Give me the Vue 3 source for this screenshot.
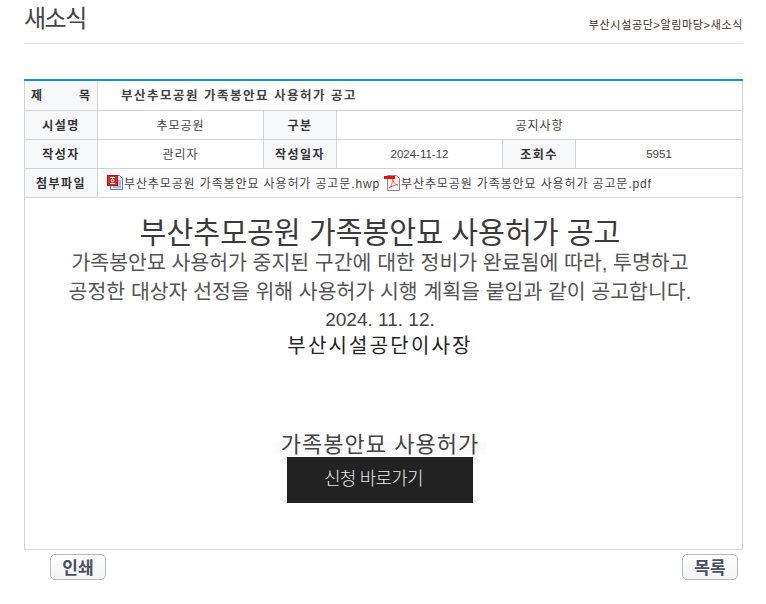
<template>
  <div class="page">
    <div class="head">
      <h2>새소식</h2>
      <div class="crumb">부산시설공단&gt;알림마당&gt;새소식</div>
    </div>

    <table class="view">
      <colgroup>
        <col class="c-label" />
        <col class="c-value" />
        <col class="c-label" />
        <col class="c-value2" />
        <col class="c-label2" />
        <col />
      </colgroup>
      <tbody>
        <tr>
          <th class="spread"><span>제</span><span>목</span></th>
          <td colspan="5" class="subject">{{ subject }}</td>
        </tr>
        <tr>
          <th>시설명</th>
          <td>추모공원</td>
          <th>구분</th>
          <td colspan="3">공지사항</td>
        </tr>
        <tr>
          <th>작성자</th>
          <td>관리자</td>
          <th>작성일자</th>
          <td class="num">2024-11-12</td>
          <th>조회수</th>
          <td class="num">5951</td>
        </tr>
        <tr>
          <th>첨부파일</th>
          <td colspan="5" class="files">
            <a class="file">
              <svg width="17" height="17" viewBox="0 0 17 17">
                <path d="M3.500 1.500h9l3 3v11h-12z" fill="#dfe8f6" stroke="#5b7fb5" />
                <path d="M6 11h8M6 13h8M11 7h3M11 9h3" stroke="#6f8fc4" />
                <rect x="0.500" y="1.500" width="10" height="10" fill="#e02a20" stroke="#a81810" />
                <path d="M3 3.500h5M5.500 3v1.500M3 9.500h5" stroke="#fff" stroke-width="1.200" fill="none" />
                <circle cx="5.500" cy="6.500" r="1.300" fill="none" stroke="#fff" />
              </svg>부산추모공원 가족봉안묘 사용허가 공고문.hwp
            </a>
            <a class="file">
              <svg width="17" height="17" viewBox="0 0 17 17">
                <path d="M3.500 1.500h9l3 3v12h-12z" fill="#f4f4f4" stroke="#8a8a8a" />
                <path d="M5 14c2.500-2 4-6 3.500-9.500C9 8 11 10.500 14 11c-3 0-6.500 1-9 3z" fill="none" stroke="#ee6a6a" />
                <rect x="0" y="2" width="11" height="3" fill="#ee0a0a" />
              </svg>부산추모공원 가족봉안묘 사용허가 공고문.pdf
            </a>
          </td>
        </tr>
      </tbody>
    </table>

    <div class="content">
      <p class="big">{{ subject }}</p>
      <p class="mid">가족봉안묘 사용허가 중지된 구간에 대한 정비가 완료됨에 따라, 투명하고</p>
      <p class="mid">공정한 대상자 선정을 위해 사용허가 시행 계획을 붙임과 같이 공고합니다.</p>
      <p class="date">2024. 11. 12.</p>
      <p class="sign">부산시설공단이사장</p>
      <div class="apply">
        <span class="apply-label">가족봉안묘 사용허가</span>
        <a class="apply-btn">신청 바로가기</a>
      </div>
    </div>

    <div class="actions">
      <button>인쇄</button>
      <button>목록</button>
    </div>
  </div>
</template>

<script setup>
const subject = '부산추모공원 가족봉안묘 사용허가 공고'
</script>

<style>
html,
body {
  margin: 0;
  background: #fff;
}
</style>

<style scoped>
.page {
  width: 719px;
  margin-left: 24px;
  font-family: "Liberation Sans", "Noto Sans CJK KR", sans-serif;
  color: #333;
}

.head {
  display: flex;
  justify-content: space-between;
  height: 43px;
  border-bottom: 1px solid #e5e5e5;
  margin-bottom: 35px;
}

.head h2 {
  margin: 0;
  font-size: 24px;
  font-weight: 400;
  line-height: 38px;
  color: #444;
  letter-spacing: -1.500px;
}

.crumb {
  font-size: 11px;
  line-height: 16px;
  margin-top: 17px;
  color: #3f2f1a;
  letter-spacing: 0.650px;
}

.view {
  width: 719px;
  table-layout: fixed;
  border-collapse: collapse;
  border-top: 2px solid #1b8dd8;
  font-size: 12px;
}

.c-label {
  width: 73px;
}

.c-value {
  width: 166px;
}

.c-value2 {
  width: 166px;
}

.c-label2 {
  width: 73px;
}

.view th,
.view td {
  height: 29px;
  padding: 0;
  border: 1px solid #d4d4d4;
  text-align: center;
  box-sizing: border-box;
  letter-spacing: 1px;
}

.view tr:first-child th,
.view tr:first-child td {
  height: 30px;
  border-top: 0;
  padding-bottom: 1px;
}

.view th {
  background: #f7f8fa;
  font-weight: 700;
  color: #333;
  letter-spacing: 1.500px;
}

.view td {
  color: #444;
}

.view td.num {
  font-size: 11.500px;
  letter-spacing: 0;
}

.view th.spread {
  text-align: left;
  padding: 0 6px 1px;
}

.view th.spread span {
  display: inline-block;
  width: 30px;
}

.view th.spread span + span {
  margin-left: 18px;
  width: 12px;
}

.view td.subject {
  text-align: left;
  padding-left: 23px;
  font-size: 12.500px;
  font-weight: 700;
  letter-spacing: 1.500px;
}

.view td.files {
  text-align: left;
  padding-left: 9px;
  letter-spacing: 0.880px;
}

.file {
  display: inline-flex;
  align-items: center;
  margin-right: 4px;
  vertical-align: middle;
}

.content {
  height: 352px;
  box-sizing: border-box;
  border: 1px solid #d4d4d4;
  border-top: 0;
  text-align: center;
  padding: 20px 7px 0 0;
}

.content p {
  margin: 0;
}

.big {
  font-size: 29.200px;
  line-height: 30px;
  color: #3a3a3a;
}

.mid {
  font-size: 20.500px;
  line-height: 29px;
  color: #555;
}

.content .date {
  margin-top: 1px;
  font-size: 19px;
  line-height: 26px;
  color: #444;
}

.sign {
  font-family: "Liberation Serif", "Noto Sans CJK KR", serif;
  font-size: 20px;
  font-weight: 400;
  line-height: 26px;
  letter-spacing: 2.200px;
  color: #222;
}

.apply {
  margin-top: 74px;
  display: flex;
  flex-direction: column;
  align-items: center;
}

.apply-label {
  font-size: 22px;
  line-height: 24px;
  height: 22px;
  padding: 0 7px;
  background: linear-gradient(transparent 9px, #f8fafd 9px);
  color: #444;
  letter-spacing: 1px;
}

.apply-btn {
  width: 186px;
  height: 46px;
  margin-top: 2px;
  box-sizing: border-box;
  padding-right: 13px;
  background: #222;
  color: #e8e8e8;
  font-size: 18px;
  font-weight: 300;
  line-height: 44px;
  letter-spacing: -0.800px;
}

.actions {
  display: flex;
  justify-content: space-between;
  padding: 4px 5px 0 26px;
}

.actions button {
  width: 56px;
  height: 26px;
  padding: 0;
  border: 1px solid #b5b9c4;
  border-radius: 5px;
  background: linear-gradient(#fff, #f2f3f6);
  font-family: "Noto Sans CJK KR", sans-serif;
  font-size: 17px;
  font-weight: 700;
  line-height: 22px;
  color: #4a4f5e;
}
</style>
